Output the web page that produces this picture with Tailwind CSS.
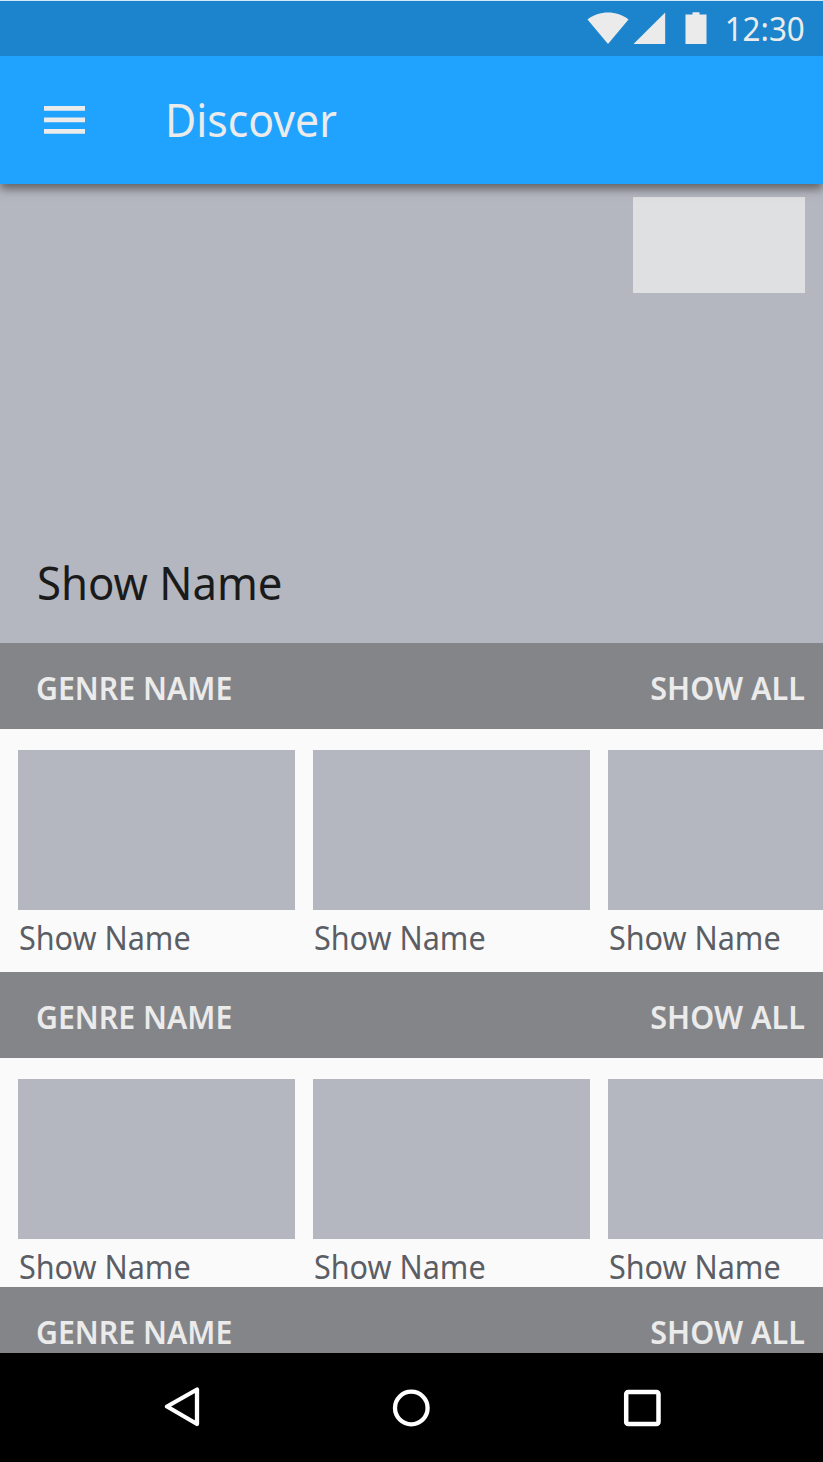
<!DOCTYPE html>
<html lang="en">
<head>
<meta charset="utf-8">
<title>Discover</title>
<script src="https://cdn.jsdelivr.net/npm/@tailwindcss/browser@4"></script>
</head>
<body class="w-[823px] h-[1462px] overflow-hidden bg-[#fafafa] font-['Noto_Sans',sans-serif]">
<div class="flex h-[1462px] w-[823px] flex-col overflow-hidden whitespace-nowrap">
  <div class="relative z-20 flex h-[55.5px] shrink-0 items-center justify-end border-t border-[#d5e8f5] bg-[#1c84cc] pr-[18px] text-[#ebebeb]">
    <svg class="h-[32px] w-[122px]" viewBox="0 0 122 32" fill="#ebebeb">
      <path d="M0.5 7.5 C12 -1.8 30 -1.8 41.5 7.5 L21 32Z"/>
      <path d="M46.5 32 L78.2 0.500 V32Z"/>
      <path d="M98.500 2.500h7V0.300h7v2.200h7V32h-21z"/>
    </svg>
    <div class="ml-[14px] h-[54px] origin-right scale-x-[0.98] text-[32px] leading-[55px]">12:30</div>
  </div>
  <header class="relative z-10 flex h-[128px] shrink-0 items-center bg-[#20a3ff] pl-[43.5px] shadow-[0_5px_9px_0px_rgba(70,70,70,0.75)]">
    <svg class="h-[28px] w-[41.500px]" viewBox="0 0 41.5 28" fill="#ebebeb"><path d="M0 0h41.5v4.700H0zM0 11.500h41.500v4.700H0zM0 23h41.500v4.700H0z"/></svg>
    <h1 class="ml-[80px] origin-left scale-x-[0.93] pb-[2px] text-[46px] leading-[60px] text-[#ebebeb]">Discover</h1>
  </header>
  <section class="flex h-[459px] shrink-0 flex-col items-start justify-between bg-[#b4b7c0] pt-[13.3px] pr-[18.5px] pb-[31px] pl-[37px]">
    <div class="h-[96px] w-[171.500px] self-end bg-[#dfe0e2]"></div>
    <h2 class="origin-left scale-x-[0.95] text-[46px] leading-[60px] text-[#1a1a1a]">Show Name</h2>
  </section>
  <div class="flex h-[86.5px] shrink-0 items-center justify-between bg-[#848589] pt-[5px] pr-[18.500px] pl-[36px] text-[32px] leading-[44px] font-semibold text-[#ebebeb]"><span class="origin-left scale-x-[0.945]">GENRE NAME</span><span class="origin-right scale-x-[0.955]">SHOW ALL</span></div>
  <div class="flex h-[242.500px] shrink-0 gap-[18px] overflow-hidden pt-[21px] pl-[18.300px] text-[32px] leading-[55px] text-[#5b5e65]">
    <div class="w-[276.700px] shrink-0"><div class="h-[160px] bg-[#b4b7c0]"></div><p class="origin-left scale-x-[0.955] pl-px">Show Name</p></div>
    <div class="w-[276.700px] shrink-0"><div class="h-[160px] bg-[#b4b7c0]"></div><p class="origin-left scale-x-[0.955] pl-px">Show Name</p></div>
    <div class="w-[276.700px] shrink-0"><div class="h-[160px] bg-[#b4b7c0]"></div><p class="origin-left scale-x-[0.955] pl-px">Show Name</p></div>
  </div>
  <div class="flex h-[86.5px] shrink-0 items-center justify-between bg-[#848589] pt-[5px] pr-[18.500px] pl-[36px] text-[32px] leading-[44px] font-semibold text-[#ebebeb]"><span class="origin-left scale-x-[0.945]">GENRE NAME</span><span class="origin-right scale-x-[0.955]">SHOW ALL</span></div>
  <div class="flex h-[228.500px] shrink-0 gap-[18px] overflow-hidden pt-[21px] pl-[18.300px] text-[32px] leading-[55px] text-[#5b5e65]">
    <div class="w-[276.700px] shrink-0"><div class="h-[160px] bg-[#b4b7c0]"></div><p class="origin-left scale-x-[0.955] pl-px">Show Name</p></div>
    <div class="w-[276.700px] shrink-0"><div class="h-[160px] bg-[#b4b7c0]"></div><p class="origin-left scale-x-[0.955] pl-px">Show Name</p></div>
    <div class="w-[276.700px] shrink-0"><div class="h-[160px] bg-[#b4b7c0]"></div><p class="origin-left scale-x-[0.955] pl-px">Show Name</p></div>
  </div>
  <div class="h-[66.5px] shrink-0 overflow-hidden bg-[#848589]">
    <div class="flex h-[86.5px] items-center justify-between pt-[5px] pr-[18.500px] pl-[36px] text-[32px] leading-[44px] font-semibold text-[#ebebeb]"><span class="origin-left scale-x-[0.945]">GENRE NAME</span><span class="origin-right scale-x-[0.955]">SHOW ALL</span></div>
  </div>
  <nav class="flex h-[109px] shrink-0 items-center gap-[190px] bg-black pl-[162px]">
    <svg class="h-[42px] w-[40px]" viewBox="0 0 40 42" fill="none" stroke="#fff" stroke-width="4.300" stroke-linejoin="round"><path d="M5 19.500 L35 2.500 V37Z"/></svg>
    <svg class="h-[42px] w-[40px]" viewBox="0 0 40 42" fill="none" stroke="#fff" stroke-width="4.300"><circle cx="19.300" cy="21" r="16.300"/></svg>
    <svg class="h-[42px] w-[40px]" viewBox="0 0 40 42" fill="none" stroke="#fff" stroke-width="4.500"><rect x="4.200" y="5" width="32.300" height="32" rx="2"/></svg>
  </nav>
</div>
</body>
</html>
